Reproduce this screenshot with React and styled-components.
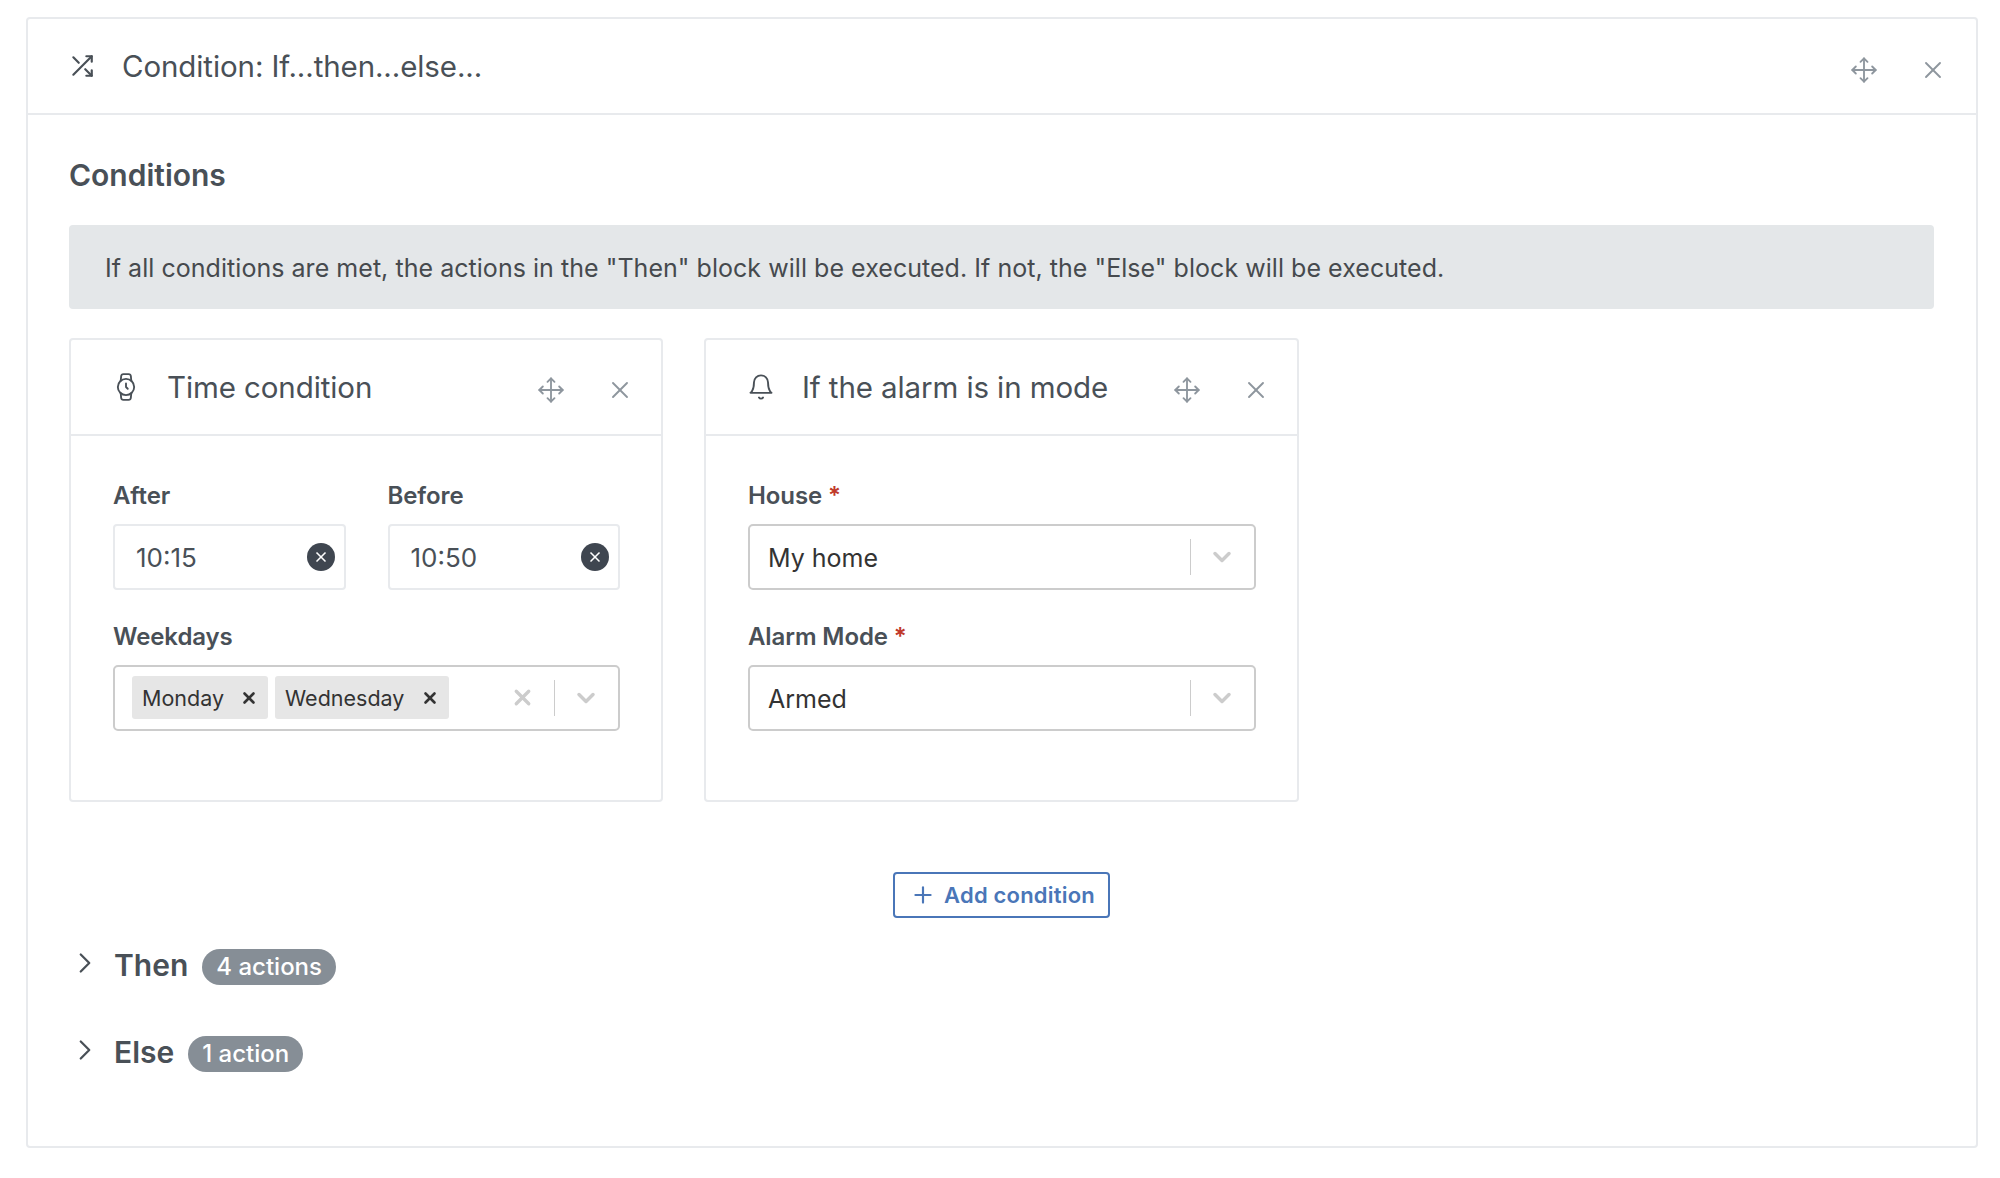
import React from "react"
import styled, { createGlobalStyle } from "styled-components"
import { FiShuffle, FiWatch, FiBell, FiMove, FiX, FiChevronRight, FiChevronDown, FiPlus } from "react-icons/fi"

const Global = createGlobalStyle`
  body {
    margin: 0;
    background: #fff;
    color: #495057;
    font-family: Inter, "Liberation Sans", sans-serif;
  }
`

const Page = styled.div`
  padding: 17px 22px 31px 26px;
`

const Card = styled.section`
  width: ${p => p.$width || "auto"};
  box-sizing: border-box;
  background: #fff;
  border: 2px solid #e8eaed;
  border-radius: 4px;
`

const CardHeader = styled.header`
  display: flex;
  align-items: center;
  height: 96px;
  box-sizing: border-box;
  padding: 0 ${p => p.$right}px 0 ${p => p.$left}px;
  border-bottom: 2px solid #e8eaed;
  color: #495057;
`

const CardTitle = styled.h3`
  flex: 1;
  margin: 0 0 0 27px;
  font-size: 29.5px;
  font-weight: 400;
  letter-spacing: -0.1px;
`

const Tools = styled.div`
  display: flex;
  align-items: center;
  gap: 41px;
  margin-top: ${p => p.$drop}px;
  color: #8e969e;
`

const Body = styled.div`
  padding: 42px 42px 0 41px;
`

const SectionTitle = styled.h2`
  margin: 0 0 32px;
  font-size: 30px;
  line-height: 36px;
  font-weight: 600;
`

const Alert = styled.div`
  display: flex;
  align-items: center;
  height: 84px;
  box-sizing: border-box;
  padding: 2px 36px 0;
  background: #e4e7e9;
  border-radius: 4px;
  font-size: 25px;
  letter-spacing: 0.04px;
  color: #464a4e;
`

const CardRow = styled.div`
  display: flex;
  gap: 41px;
  margin-top: 28.5px;
`

const CardBody = styled.div`
  height: 364px;
  box-sizing: border-box;
  padding: 45px 41px 0 42px;
`

const FieldRow = styled.div`
  display: flex;
  gap: 42px;
`

const Field = styled.div`
  flex: 1;
  min-width: 0;
  margin-bottom: 32px;
`

const Label = styled.label`
  display: block;
  margin-bottom: 13px;
  font-size: 24px;
  line-height: 30px;
  font-weight: 600;
  letter-spacing: -0.1px;
`

const Star = styled.span`
  color: #c0392b;
`

const TimeInput = styled.div`
  display: flex;
  align-items: center;
  height: 66px;
  box-sizing: border-box;
  padding: 0 9px 0 21px;
  border: 2px solid #e8eaed;
  border-radius: 4px;
  font-size: 26px;
  color: #495057;
`

const TimeValue = styled.span`
  flex: 1;
  padding-top: 2px;
`

const ClearDot = styled.span`
  display: flex;
  align-items: center;
  justify-content: center;
  width: 28px;
  height: 28px;
  border-radius: 50%;
  background: #3f4650;
  color: #fff;
`

const Select = styled.div`
  display: flex;
  align-items: center;
  height: 66px;
  box-sizing: border-box;
  padding: 0 18px 0 ${p => p.$multi ? 17 : 18}px;
  border: 2px solid #ccc;
  border-radius: 5px;
  font-size: 25px;
  color: #333;
`

const SelectValue = styled.div`
  flex: 1;
  display: flex;
  gap: 7px;
  min-width: 0;
  padding-top: ${p => p.$multi ? 0 : 2}px;
`

const Chip = styled.span`
  display: flex;
  align-items: center;
  justify-content: space-between;
  width: ${p => p.$width}px;
  height: 43px;
  box-sizing: border-box;
  padding: 0 10px;
  background: #e6e6e6;
  border-radius: 3px;
  font-size: 21.5px;
  color: #333;
`

const Divider = styled.span`
  width: 1px;
  height: 36px;
  margin: 0 17px 0 ${p => p.$left || 0}px;
  background: #ccc;
`

const Center = styled.div`
  display: flex;
  justify-content: center;
  margin-top: 70px;
`

const AddButton = styled.button`
  display: flex;
  align-items: center;
  gap: 8px;
  height: 46px;
  box-sizing: border-box;
  padding: 0 13px 0 15px;
  background: #fff;
  border: 2px solid #4a76b8;
  border-radius: 4px;
  color: #4a76b8;
  font-family: inherit;
  font-size: 22px;
  font-weight: 600;
  letter-spacing: 0.2px;
`

const Toggle = styled.div`
  display: flex;
  align-items: center;
  margin-top: ${p => p.$top}px;
  color: #495057;
`

const Caret = styled(FiChevronRight)`
  margin: 0 0 4px -1px;
`

const ToggleTitle = styled.span`
  margin: 0 14px 0 12px;
  font-size: 30px;
  line-height: 36px;
  font-weight: 600;
`

const Badge = styled.span`
  display: flex;
  align-items: center;
  height: 36px;
  margin-top: 4px;
  padding: 0 14px;
  border-radius: 18px;
  background: #868e96;
  color: #fff;
  font-size: 24px;
  font-weight: 500;
`

const Bottom = styled.div`
  height: 74px;
`

const Multi = () => (
  <Select $multi>
    <SelectValue $multi>
      <Chip $width={136}>Monday <FiX size={18} strokeWidth={3.5} /></Chip>
      <Chip $width={174}>Wednesday <FiX size={18} strokeWidth={3.5} /></Chip>
    </SelectValue>
    <FiX size={25} strokeWidth={3.2} color="#ccc" />
    <Divider $left={19} />
    <FiChevronDown size={28} strokeWidth={3} color="#ccc" />
  </Select>
)

const Single = ({ value }) => (
  <Select>
    <SelectValue>{value}</SelectValue>
    <Divider />
    <FiChevronDown size={28} strokeWidth={3} color="#ccc" />
  </Select>
)

const Time = ({ value }) => (
  <TimeInput>
    <TimeValue>{value}</TimeValue>
    <ClearDot><FiX size={16} strokeWidth={2.5} /></ClearDot>
  </TimeInput>
)

const ToolIcons = () => (
  <>
    <FiMove size={28} strokeWidth={1.6} />
    <FiX size={28} strokeWidth={1.6} />
  </>
)

const SmallHeader = ({ icon, title }) => (
  <CardHeader $left={41} $right={27}>
    {icon}
    <CardTitle>{title}</CardTitle>
    <Tools $drop={6}><ToolIcons /></Tools>
  </CardHeader>
)

export default function App() {
  return (
    <Page>
      <Global />
      <Card>
        <CardHeader $left={41} $right={29}>
          <FiShuffle size={26} />
          <CardTitle>Condition: If...then...else...</CardTitle>
          <Tools $drop={8}><ToolIcons /></Tools>
        </CardHeader>
        <Body>
          <SectionTitle>Conditions</SectionTitle>
          <Alert>If all conditions are met, the actions in the "Then" block will be executed. If not, the "Else" block will be executed.</Alert>
          <CardRow>
            <Card $width="594px">
              <SmallHeader icon={<FiWatch size={28} strokeWidth={1.6} />} title="Time condition" />
              <CardBody>
                <FieldRow>
                  <Field>
                    <Label>After</Label>
                    <Time value="10:15" />
                  </Field>
                  <Field>
                    <Label>Before</Label>
                    <Time value="10:50" />
                  </Field>
                </FieldRow>
                <Field>
                  <Label>Weekdays</Label>
                  <Multi />
                </Field>
              </CardBody>
            </Card>
            <Card $width="595px">
              <SmallHeader icon={<FiBell size={28} strokeWidth={1.6} />} title="If the alarm is in mode" />
              <CardBody>
                <Field>
                  <Label>House <Star>*</Star></Label>
                  <Single value="My home" />
                </Field>
                <Field>
                  <Label>Alarm Mode <Star>*</Star></Label>
                  <Single value="Armed" />
                </Field>
              </CardBody>
            </Card>
          </CardRow>
          <Center>
            <AddButton><FiPlus size={26} />Add condition</AddButton>
          </Center>
          <Toggle $top={27}>
            <Caret size={34} strokeWidth={1.6} />
            <ToggleTitle>Then</ToggleTitle>
            <Badge>4 actions</Badge>
          </Toggle>
          <Toggle $top={47}>
            <Caret size={34} strokeWidth={1.6} />
            <ToggleTitle>Else</ToggleTitle>
            <Badge>1 action</Badge>
          </Toggle>
          <Bottom />
        </Body>
      </Card>
    </Page>
  )
}
